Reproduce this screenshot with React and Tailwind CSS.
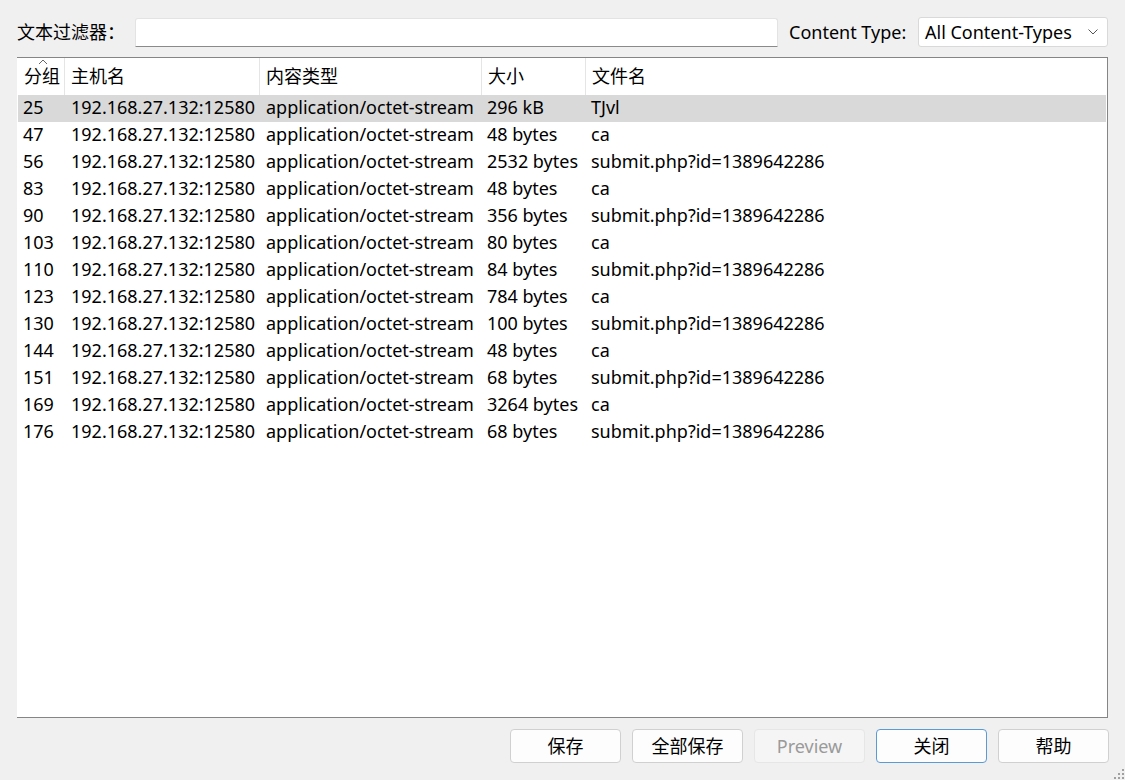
import React from 'react';

const rows = [
    ['25', '192.168.27.132:12580', 'application/octet-stream', '296 kB', 'TJvl'],
    ['47', '192.168.27.132:12580', 'application/octet-stream', '48 bytes', 'ca'],
    ['56', '192.168.27.132:12580', 'application/octet-stream', '2532 bytes', 'submit.php?id=1389642286'],
    ['83', '192.168.27.132:12580', 'application/octet-stream', '48 bytes', 'ca'],
    ['90', '192.168.27.132:12580', 'application/octet-stream', '356 bytes', 'submit.php?id=1389642286'],
    ['103', '192.168.27.132:12580', 'application/octet-stream', '80 bytes', 'ca'],
    ['110', '192.168.27.132:12580', 'application/octet-stream', '84 bytes', 'submit.php?id=1389642286'],
    ['123', '192.168.27.132:12580', 'application/octet-stream', '784 bytes', 'ca'],
    ['130', '192.168.27.132:12580', 'application/octet-stream', '100 bytes', 'submit.php?id=1389642286'],
    ['144', '192.168.27.132:12580', 'application/octet-stream', '48 bytes', 'ca'],
    ['151', '192.168.27.132:12580', 'application/octet-stream', '68 bytes', 'submit.php?id=1389642286'],
    ['169', '192.168.27.132:12580', 'application/octet-stream', '3264 bytes', 'ca'],
    ['176', '192.168.27.132:12580', 'application/octet-stream', '68 bytes', 'submit.php?id=1389642286'],
];

const cols = 'grid grid-cols-[47px_195px_222px_104px_1fr]';

const HeaderCell = ({ children, last }) => (
    <div className={`relative flex items-center pl-[6px] h-full ${last ? '' : 'border-r border-[#e5e5e5]'}`}>
        {children}
    </div>
);

const Button = ({ children, disabled, primary }) => (
    <button
        className={`w-[111px] h-[34px] rounded-[4px] border text-[18px] leading-none ${
            disabled
                ? 'bg-[#f5f5f5] border-[#e6e6e6] text-[#9a9a9a]'
                : primary
                ? 'bg-[#fdfdfd] border-[#5b9bd5] text-black'
                : 'bg-[#fdfdfd] border-[#d0d0d0] text-black'
        }`}
    >
        {children}
    </button>
);

const App = () => {
    return (
        <div
            className="w-[1125px] h-[780px] bg-[#f0f0f0] flex flex-col relative overflow-hidden text-black"
            style={{ fontFamily: '"Noto Sans", "Noto Sans CJK SC", sans-serif' }}
        >
            {/* filter bar */}
            <div className="flex items-center h-[30px] mt-[17px] px-[17px] text-[18px]">
                <span className="w-[118px]">文本过滤器：</span>
                <div className="w-[643px] h-[29px] bg-white border border-[#e3e3e3] border-b-[#8a8a8a] rounded-t-[3px]" />
                <span className="ml-[11px] w-[129px]">Content Type:</span>
                <div className="w-[190px] h-[30px] bg-white border border-[#d9d9d9] rounded-[3px] flex items-center justify-between pl-[6px] pr-[8px]">
                    <span>All Content-Types</span>
                    <svg width="12" height="8" viewBox="0 0 12 8" fill="none" stroke="#555" strokeWidth="1">
                        <polyline points="1.5,1.5 6,6 10.5,1.5" />
                    </svg>
                </div>
            </div>

            {/* table */}
            <div className="mx-[17px] mt-[10px] h-[661px] bg-white border-t border-r border-b border-[#858585] pl-px text-[18px]">
                <div className={`${cols} h-[37px] relative`}>
                    <HeaderCell>
                        分组
                        <svg className="absolute left-[20px] top-[1px]" width="10" height="6" viewBox="0 0 10 6" fill="none" stroke="#666" strokeWidth="1">
                            <polyline points="1,5 5,1 9,5" />
                        </svg>
                    </HeaderCell>
                    <HeaderCell>主机名</HeaderCell>
                    <HeaderCell>内容类型</HeaderCell>
                    <HeaderCell>大小</HeaderCell>
                    <HeaderCell last>文件名</HeaderCell>
                </div>
                <div className="mr-px">
                    {rows.map((r, i) => (
                        <div
                            key={i}
                            className={`${cols} h-[27px] items-center whitespace-nowrap leading-none pb-[4px] ${i === 0 ? 'bg-[#d9d9d9]' : ''}`}
                        >
                            <span className="pl-[5px]">{r[0]}</span>
                            <span className="pl-[6px]">{r[1]}</span>
                            <span className="pl-[6px]">{r[2]}</span>
                            <span className="pl-[5px]">{r[3]}</span>
                            <span className="pl-[5px]">{r[4]}</span>
                        </div>
                    ))}
                </div>
            </div>

            {/* buttons */}
            <div className="flex justify-end gap-[11px] mt-[11px] pl-[17px] pr-[16px]">
                <Button>保存</Button>
                <Button>全部保存</Button>
                <Button disabled>Preview</Button>
                <Button primary>关闭</Button>
                <Button>帮助</Button>
            </div>

            {/* resize grip */}
            <svg className="absolute right-0 bottom-0" width="12" height="12" viewBox="0 0 12 12" fill="#a0a0a0">
                <rect x="9" y="1" width="2" height="2" />
                <rect x="5" y="5" width="2" height="2" />
                <rect x="9" y="5" width="2" height="2" />
                <rect x="1" y="9" width="2" height="2" />
                <rect x="5" y="9" width="2" height="2" />
                <rect x="9" y="9" width="2" height="2" />
            </svg>
        </div>
    );
};

export default App;
